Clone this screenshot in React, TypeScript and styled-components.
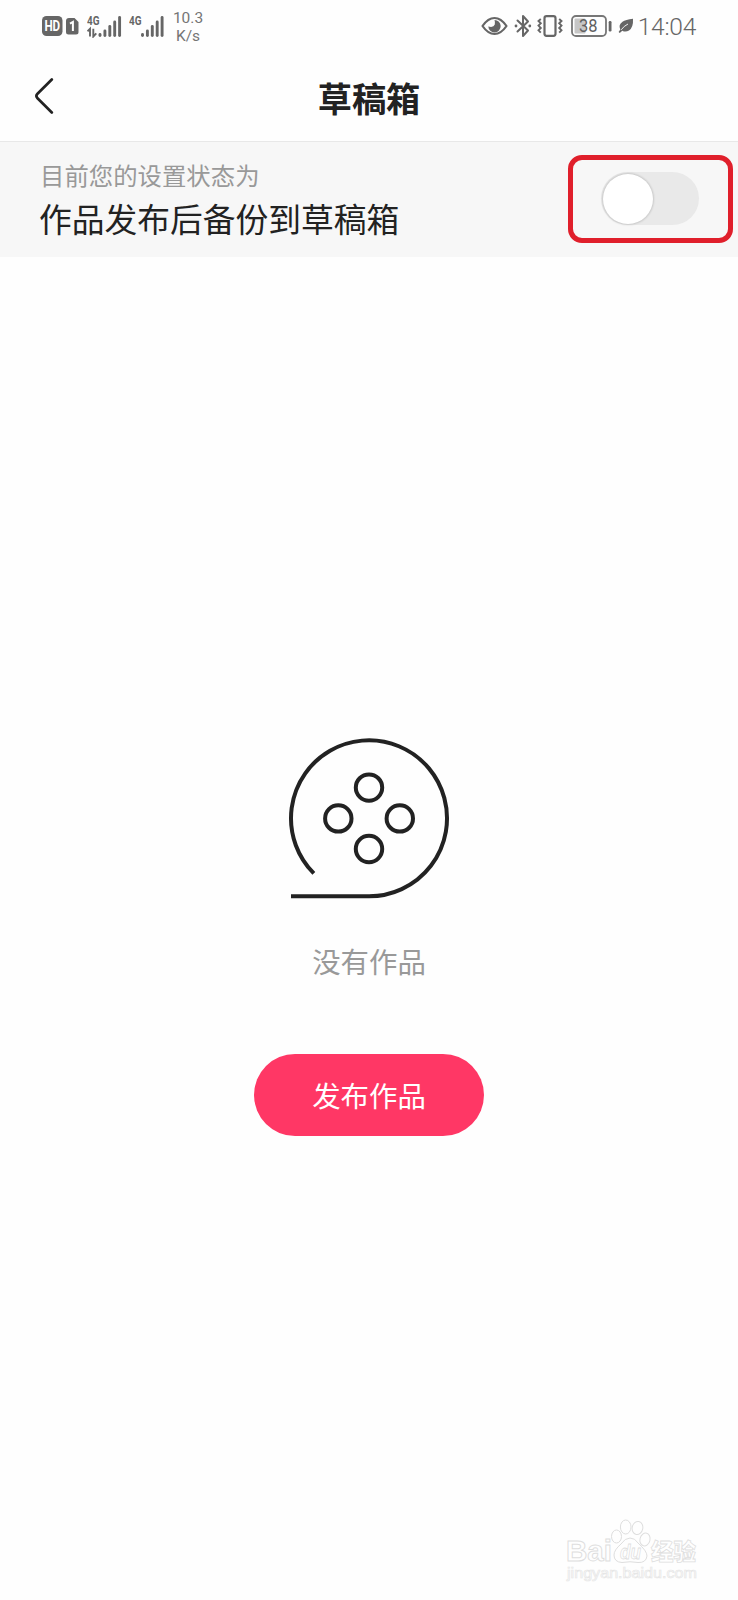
import React from "react";
import styled, { createGlobalStyle } from "styled-components";

const GlobalStyle = createGlobalStyle`
  *, *::before, *::after { box-sizing: border-box; }
  body { margin: 0; background: #fefefe; }
`;

const Screen = styled.div`
  position: relative;
  display: flex;
  flex-direction: column;
  width: 738px;
  height: 1600px;
  overflow: hidden;
  background: #fefefe;
  color: #222;
  font-family: "Noto Sans CJK SC", sans-serif;
`;

const StatusBar = styled.div`
  display: flex;
  align-items: center;
  justify-content: space-between;
  height: 52px;
  padding: 0 42px;
  color: #666;
  font-family: Roboto, sans-serif;
`;

const StatusGroup = styled.div`
  display: flex;
  align-items: center;
`;

const NetSpeed = styled.div`
  margin-left: 7px;
  padding-top: 1px;
  width: 32px;
  font-size: 15.5px;
  line-height: 18px;
  text-align: center;
  white-space: nowrap;
  color: #757575;
`;

const Clock = styled.div`
  display: flex;
  justify-content: flex-end;
  width: 57px;
  margin-left: 5px;
  padding-top: 2px;
  font-size: 24.6px;
  font-weight: 300;
  line-height: 50px;
  letter-spacing: -0.3px;
  white-space: nowrap;
`;

const Header = styled.header`
  display: grid;
  grid-template-columns: 60px 1fr 60px;
  align-items: center;
  height: 90px;
  border-bottom: 1px solid #e8e8e8;
`;

const BackButton = styled.button`
  display: flex;
  justify-content: flex-end;
  padding: 0 6px 1px 0;
  border: 0;
  background: none;
`;

const Title = styled.h1`
  margin: 0;
  font-size: 34.2px;
  font-weight: 700;
  line-height: 50px;
  text-align: center;
`;

const SettingRow = styled.section`
  display: flex;
  align-items: center;
  justify-content: space-between;
  height: 115px;
  padding: 0 5px 0 39px;
  background: #f7f7f7;
`;

const SettingText = styled.div`
  display: flex;
  flex-direction: column;
`;

const Caption = styled.span`
  padding-left: 1px;
  font-size: 24.4px;
  line-height: 34px;
  color: #999;
`;

const SettingValue = styled.span`
  margin-bottom: -1px;
  padding-top: 1px;
  font-size: 32.75px;
  line-height: 50px;
`;

const Highlight = styled.div`
  display: flex;
  align-items: center;
  width: 165px;
  height: 88px;
  margin-bottom: 2px;
  padding-left: 28px;
  border: 5px solid #e01f2b;
  border-radius: 14px;
`;

const Toggle = styled.button`
  display: flex;
  align-items: center;
  width: 98px;
  height: 53px;
  padding: 0 2px;
  border: 0;
  border-radius: 27px;
  background: #e9e9e9;
`;

const Knob = styled.span`
  width: 50px;
  height: 50px;
  border-radius: 50%;
  background: #fff;
  box-shadow: 0 0 2px 1px rgba(0, 0, 0, 0.14);
`;

const EmptyState = styled.main`
  display: flex;
  flex: 1;
  flex-direction: column;
  align-items: center;
  padding-top: 481px;
`;

const EmptyLabel = styled.p`
  margin: 40px 0 0;
  font-size: 28.4px;
  line-height: 42px;
  color: #999;
`;

const PublishButton = styled.button`
  width: 230px;
  height: 82px;
  margin-top: 72px;
  padding: 0 0 1px;
  border: 0;
  border-radius: 41px;
  background: #ff3765;
  color: #fff;
  font: inherit;
  font-size: 28.4px;
`;

const Watermark = styled.svg`
  position: absolute;
  left: 560px;
  top: 1514px;
`;

const Icon = styled.svg<{ $gap?: number }>`
  display: block;
  flex: none;
  margin-left: ${(p) => p.$gap ?? 0}px;
`;

function SignalBars({ x = 0 }: { x?: number }) {
  const heights = [4, 7.5, 12, 16.5, 21];
  return (
    <g stroke="#666" strokeWidth="2.9" strokeLinecap="round">
      {heights.map((h, i) => (
        <line key={h} x1={x + i * 4.9} x2={x + i * 4.9} y1={23 - h + 1.4} y2={21.6} />
      ))}
    </g>
  );
}

function NetworkLabel() {
  return (
    <text x="0" y="11" fontSize="13" fontWeight="700" fill="#666" textLength="12.5" lengthAdjust="spacingAndGlyphs">
      4G
    </text>
  );
}

function LeftStatus() {
  return (
    <StatusGroup>
      <Icon width="21" height="20" viewBox="0 0 21 20">
        <rect width="20.5" height="20" rx="4.5" fill="#666" />
        <text x="2.4" y="15" fontSize="14" fontWeight="700" fill="#fff" textLength="15.8" lengthAdjust="spacingAndGlyphs">
          HD
        </text>
      </Icon>
      <Icon $gap={3} width="13" height="17" viewBox="0 0 13 17">
        <path d="M3 0H8.5L12.5 4V14Q12.5 16.5 10 16.5H2.5Q0 16.5 0 14V3Q0 0 3 0Z" fill="#666" />
        <path d="M4 5.7L6.9 4V13" fill="none" stroke="#fff" strokeWidth="2" />
      </Icon>
      <Icon $gap={8} width="35" height="24" viewBox="0 0 35 24">
        <NetworkLabel />
        <path d="M0.5 17.3L3 14.8V22.5M6.3 14.8V22.5L9.3 19.3" fill="none" stroke="#666" strokeWidth="1.9" />
        <SignalBars x={13} />
      </Icon>
      <Icon $gap={7} width="36" height="24" viewBox="0 0 36 24">
        <NetworkLabel />
        <SignalBars x={13.5} />
      </Icon>
      <NetSpeed>
        10.3
        <br />
        K/s
      </NetSpeed>
    </StatusGroup>
  );
}

function RightStatus() {
  return (
    <StatusGroup>
      <Icon width="27" height="20" viewBox="0 0 27 20">
        <path d="M1.5 10Q7 2 13.5 2T25.5 10Q20 18 13.5 18T1.5 10Z" fill="none" stroke="#666" strokeWidth="2.2" strokeLinejoin="round" />
        <path d="M13.5 4A6.2 6.2 0 1 1 7.3 10.5Q12.5 12 13.8 8.5Q14.2 6 13.5 4Z" fill="#666" />
      </Icon>
      <Icon $gap={6} width="18" height="24" viewBox="0 0 18 24">
        <path d="M3.5 6.5L14 16.5L9 22V2L14 7.5L3.5 17.5" fill="none" stroke="#666" strokeWidth="2" strokeLinejoin="round" strokeLinecap="round" />
        <circle cx="2" cy="12" r="1.4" fill="#666" />
        <circle cx="15.8" cy="12" r="1.4" fill="#666" />
      </Icon>
      <Icon $gap={5} width="26" height="22" viewBox="0 0 26 22">
        <rect x="7.5" y="1.2" width="11" height="19.6" rx="2" fill="none" stroke="#666" strokeWidth="2.2" />
        <path d="M3.8 4L1.5 6L3.8 8.3L1.5 10.6L3.8 13L1.5 15.3L3.8 17.7M22.2 4L24.5 6L22.2 8.3L24.5 10.6L22.2 13L24.5 15.3L22.2 17.7" fill="none" stroke="#666" strokeWidth="1.9" />
      </Icon>
      <Icon $gap={8} width="41" height="22" viewBox="0 0 41 22">
        <rect x="3.5" y="3.5" width="11" height="15" rx="1" fill="#c6c6c6" />
        <rect x="1" y="1" width="34" height="20" rx="4" fill="none" stroke="#777" strokeWidth="1.8" />
        <rect x="37.7" y="6" width="2.8" height="10.5" rx="1.2" fill="#666" />
        <text x="8" y="17.4" fontSize="18.5" fill="#606060" textLength="18.5" lengthAdjust="spacingAndGlyphs">
          38
        </text>
      </Icon>
      <Icon $gap={6} width="16" height="16" viewBox="0 0 16 16">
        <path d="M15 0.8Q15.5 9.5 11 12.5Q7.5 14.5 4.3 12.7L1.8 15L0.6 13.9L2.3 11.5Q0 7 4.5 3.7Q7.5 1.8 15 0.8Z" fill="#666" />
        <path d="M3.2 11.8Q6 7.9 10 6" fill="none" stroke="#fefefe" strokeWidth="0.9" />
      </Icon>
      <Clock>14:04</Clock>
    </StatusGroup>
  );
}

function FilmReel() {
  return (
    <Icon width="162" height="162" viewBox="0 0 162 162" fill="none" stroke="#222" strokeWidth="4">
      <path d="M25.85 135.45A78 78 0 1 1 81 158.3H3" />
      <circle cx="81" cy="49.6" r="13.2" />
      <circle cx="50.3" cy="80.4" r="13.2" />
      <circle cx="111.8" cy="80.4" r="13.2" />
      <circle cx="81" cy="111" r="13.2" />
    </Icon>
  );
}

function BaiduMark() {
  return (
    <Watermark width="142" height="76" viewBox="0 0 142 76" fill="#fefefe" stroke="#dedede" strokeWidth="1">
      <text x="6" y="47" fontFamily="Liberation Sans, sans-serif" fontWeight="700" fontSize="30" textLength="46" lengthAdjust="spacingAndGlyphs">
        Bai
      </text>
      <ellipse cx="56.5" cy="22.5" rx="5" ry="6.5" />
      <ellipse cx="65.7" cy="13" rx="5.3" ry="7" />
      <ellipse cx="77.5" cy="14" rx="5.3" ry="6.6" transform="rotate(12 77.5 14)" />
      <ellipse cx="85" cy="25.5" rx="5" ry="6.5" transform="rotate(15 85 25.5)" />
      <path d="M70 24Q75 24 78 29Q87 37 87 42Q86 49 78 48.5Q70 47 62 48.5Q54 48 54 41Q54 36 61 30Q65 24 70 24Z" />
      <text x="60" y="44.5" fontFamily="Liberation Sans, sans-serif" fontWeight="700" fontStyle="italic" fontSize="20" strokeWidth="0.8" textLength="21" lengthAdjust="spacingAndGlyphs">
        du
      </text>
      <text x="91" y="45.8" fontFamily="Noto Sans CJK SC, sans-serif" fontWeight="900" fontSize="23" strokeWidth="0.8" textLength="45" lengthAdjust="spacingAndGlyphs">
        经验
      </text>
      <text x="7" y="64" fontFamily="Liberation Sans, sans-serif" fontSize="15.5" stroke="#e6e6e6" strokeWidth="0.7" textLength="130" lengthAdjust="spacingAndGlyphs">
        jingyan.baidu.com
      </text>
    </Watermark>
  );
}

export default function App() {
  return (
    <Screen>
      <GlobalStyle />
      <StatusBar>
        <LeftStatus />
        <RightStatus />
      </StatusBar>
      <Header>
        <BackButton aria-label="返回">
          <Icon width="20" height="38" viewBox="0 0 20 38">
            <path d="M17.8 2.5L3.5 16.8Q1.3 19 3.5 21.2L17.8 35.5" fill="none" stroke="#222" strokeWidth="2.7" strokeLinecap="round" />
          </Icon>
        </BackButton>
        <Title>草稿箱</Title>
      </Header>
      <SettingRow>
        <SettingText>
          <Caption>目前您的设置状态为</Caption>
          <SettingValue>作品发布后备份到草稿箱</SettingValue>
        </SettingText>
        <Highlight>
          <Toggle role="switch" aria-checked="false" aria-label="备份到草稿箱">
            <Knob />
          </Toggle>
        </Highlight>
      </SettingRow>
      <EmptyState>
        <FilmReel />
        <EmptyLabel>没有作品</EmptyLabel>
        <PublishButton>发布作品</PublishButton>
      </EmptyState>
      <BaiduMark />
    </Screen>
  );
}
